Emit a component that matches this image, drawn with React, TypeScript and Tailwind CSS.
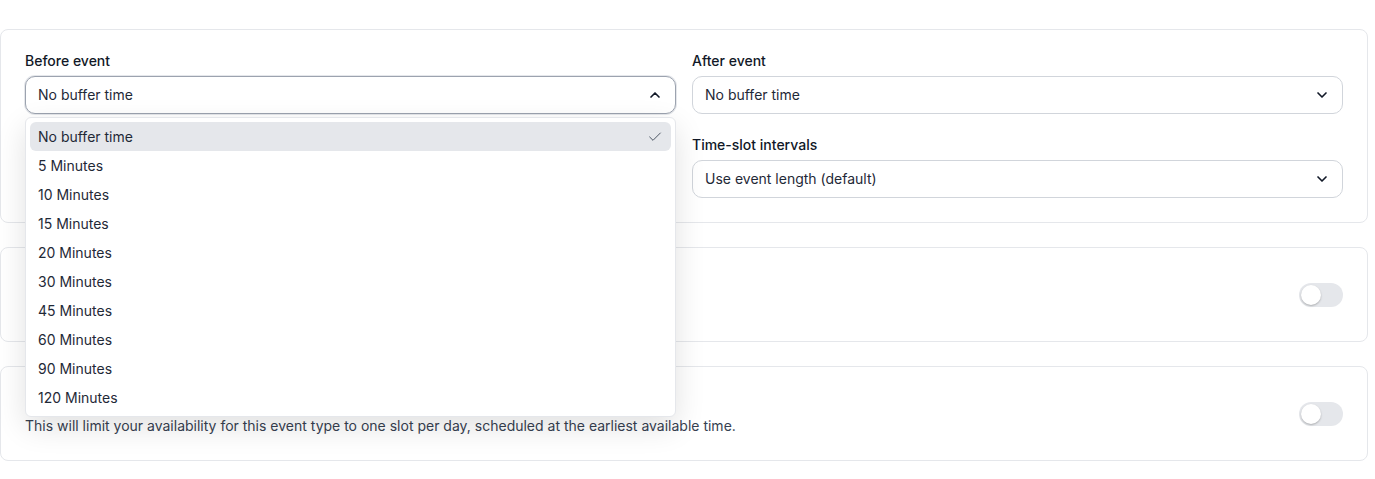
import React from 'react';
import { ChevronDown, ChevronUp, Check } from 'lucide-react';

const options = [
  'No buffer time',
  '5 Minutes',
  '10 Minutes',
  '15 Minutes',
  '20 Minutes',
  '30 Minutes',
  '45 Minutes',
  '60 Minutes',
  '90 Minutes',
  '120 Minutes',
];

function Toggle() {
  return (
    <div className="w-[44px] h-[24px] rounded-full bg-[#e5e7eb] p-[2px] flex items-center shrink-0">
      <div className="w-[20px] h-[20px] rounded-full bg-white shadow-[0_1px_2px_rgba(0,0,0,0.25)]" />
    </div>
  );
}

function SelectBox({ value, open = false }: { value: string; open?: boolean }) {
  return (
    <div
      className={
        open
          ? 'h-[38px] flex items-center justify-between px-3 rounded-[10px] border border-[#9ca3af] bg-white shadow-[0_0_0_1px_#e5e7eb] text-sm text-[#1f2937]'
          : 'h-[38px] flex items-center justify-between px-3 rounded-[10px] border border-[#d1d5db] bg-white text-sm text-[#1f2937]'
      }
    >
      <span>{value}</span>
      {open ? (
        <ChevronUp className="w-4 h-4 text-[#111827]" strokeWidth={2.5} />
      ) : (
        <ChevronDown className="w-4 h-4 text-[#111827]" strokeWidth={2.5} />
      )}
    </div>
  );
}

export default function App() {
  return (
    <div className="min-h-screen bg-white pt-[29px] pr-[7px] font-['Inter',sans-serif] text-[#111827]">
      <div className="flex flex-col gap-6">
        {/* Buffer times */}
        <div className="rounded-lg border border-[#e5e7eb] p-6">
          <div className="grid grid-cols-2 gap-x-4">
            <div className="relative">
              <label className="block text-sm leading-[14px] font-medium text-[#111827] mb-2">Before event</label>
              <SelectBox value="No buffer time" open />
              {/* Open dropdown */}
              <div className="absolute left-0 right-0 top-[63px] z-20 rounded-md border border-[#e5e7eb] bg-white p-1 shadow-[0_10px_30px_rgba(0,0,0,0.12)]">
                {options.map((o, i) => (
                  <div
                    key={o}
                    className={
                      i === 0
                        ? 'h-[29px] flex items-center justify-between px-2 rounded-md bg-[#e5e7eb] text-sm text-[#1f2937]'
                        : 'h-[29px] flex items-center justify-between px-2 rounded-md text-sm text-[#1f2937]'
                    }
                  >
                    <span>{o}</span>
                    {i === 0 && <Check className="w-4 h-4 text-[#4b5563]" strokeWidth={1.5} />}
                  </div>
                ))}
              </div>
            </div>
            <div>
              <label className="block text-sm leading-[14px] font-medium text-[#111827] mb-2">After event</label>
              <SelectBox value="No buffer time" />
            </div>
            <div />
            <div className="mt-6">
              <label className="block text-sm leading-[14px] font-medium text-[#111827] mb-2">Time-slot intervals</label>
              <SelectBox value="Use event length (default)" />
            </div>
          </div>
        </div>

        {/* Limit booking frequency */}
        <div className="rounded-lg border border-[#e5e7eb] p-6 flex items-center justify-between">
          <div>
            <h3 className="text-sm font-semibold text-[#111827]">Limit booking frequency</h3>
            <p className="text-sm text-[#374151] mt-[5px]">Limit how many times this event can be booked</p>
          </div>
          <Toggle />
        </div>

        {/* First slot only */}
        <div className="rounded-lg border border-[#e5e7eb] p-6 flex items-center justify-between">
          <div>
            <h3 className="text-sm font-semibold text-[#111827]">Only show the first slot of each day as available</h3>
            <p className="text-sm text-[#374151] mt-[5px]">
              This will limit your availability for this event type to one slot per day, scheduled at the earliest available time.
            </p>
          </div>
          <Toggle />
        </div>
      </div>
    </div>
  );
}
